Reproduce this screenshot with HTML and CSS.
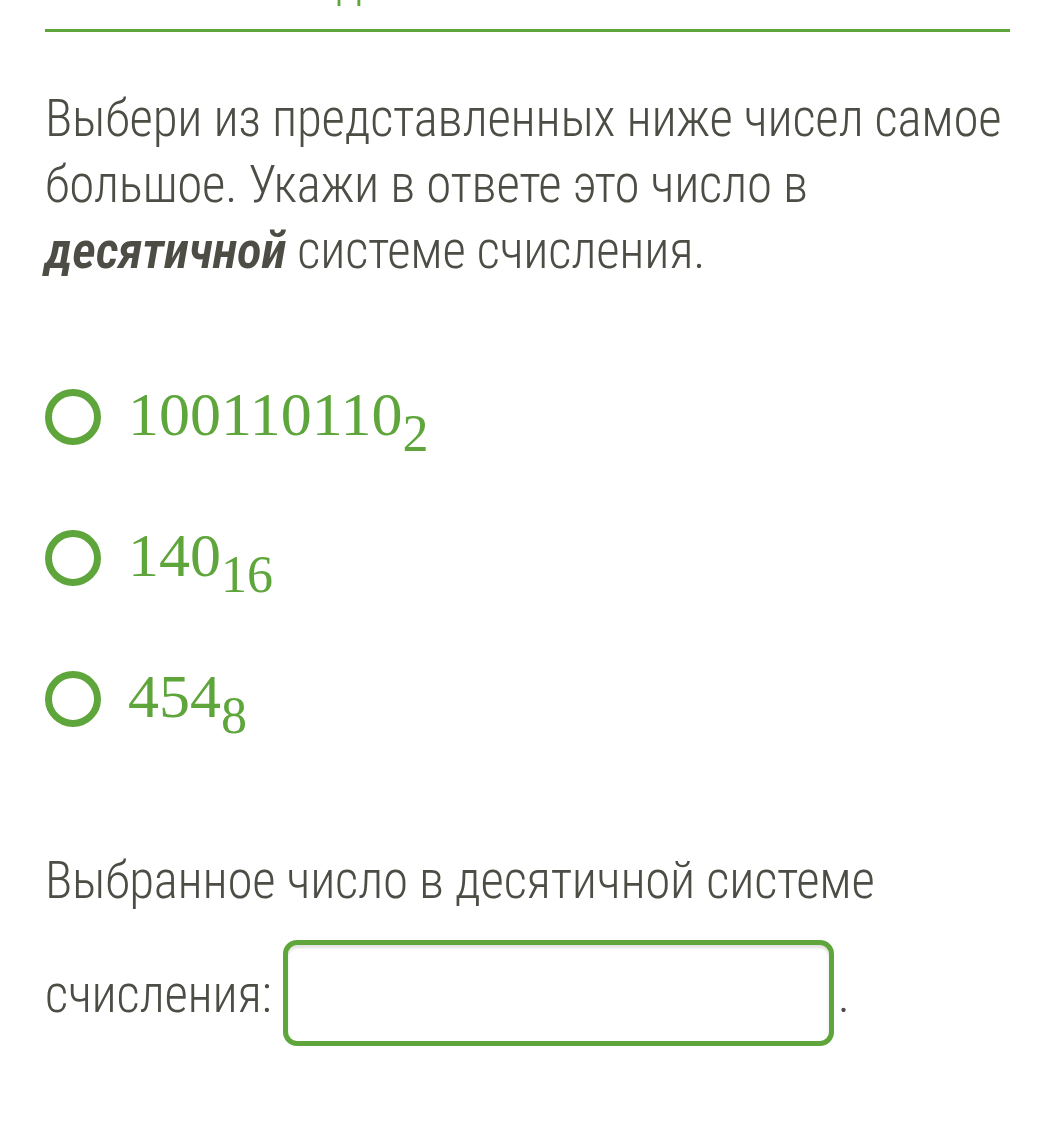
FILE: index.html
```html
<!DOCTYPE html>
<html lang="ru">
<head>
<meta charset="utf-8">
<title>Задание</title>
<link rel="stylesheet" href="styles.css">
</head>
<body>
<main class="page">
  <header class="topbar">
    <h2 class="title">Задание</h2>
  </header>

  <p class="question">Выбери из представленных ниже чисел самое большое. Укажи в ответе это число в <b class="em">десятичной</b> системе счисления.</p>

  <ul class="options">
    <li class="option"><span class="radio"></span><span class="num">100110110<sub>2</sub></span></li>
    <li class="option"><span class="radio"></span><span class="num">140<sub>16</sub></span></li>
    <li class="option"><span class="radio"></span><span class="num">454<sub>8</sub></span></li>
  </ul>

  <p class="answer">Выбранное число в десятичной системе счисления: <span class="answer-box"></span>.</p>
</main>
</body>
</html>
```

FILE: styles.css
```css
html, body {
  margin: 0;
  padding: 0;
  background: #ffffff;
}

.page {
  padding: 0 46px 0 45px;
  font-family: "Roboto Condensed", "Roboto", "Liberation Sans", sans-serif;
  font-stretch: 75%;
  font-weight: 300;
  font-size: 51px;
  letter-spacing: -0.25px;
  line-height: 66px;
  color: #4d4d46;
}

.topbar {
  display: flow-root;
  border-bottom: 3px solid #5ea53b;
  height: 29px;
}

.title {
  margin: -52px 0 0 0;
  padding-left: 240px;
  font-size: 52px;
  font-weight: 300;
  line-height: 66px;
  color: #5ea53b;
}

.question {
  margin: 54px 0 0 0;
}

.em {
  font-weight: 600;
  font-style: italic;
}

.options {
  list-style: none;
  margin: 62px 0 0 0;
  padding: 0;
}

.option {
  display: flex;
  align-items: center;
  gap: 27px;
  height: 141px;
}

.radio {
  flex: none;
  width: 42px;
  height: 42px;
  border: 7px solid #5ea53b;
  border-radius: 50%;
}

.num {
  font-family: "Liberation Serif", "Times New Roman", serif;
  font-stretch: normal;
  font-weight: 400;
  letter-spacing: 0;
  font-size: 62px;
  line-height: 1;
  color: #5ea53b;
  margin-top: -6px;
}

.num sub {
  font-size: 52px;
  vertical-align: -16px;
  line-height: 0;
}

.answer {
  margin: 79px 0 0 0;
}

.answer-box {
  display: inline-block;
  width: 541px;
  height: 96px;
  border: 5px solid #5ea53b;
  border-radius: 14px;
  box-shadow: inset 0 3px 3px rgba(0, 0, 0, 0.12);
  vertical-align: -34px;
  margin: 26px 4px 0 0;
}
```
